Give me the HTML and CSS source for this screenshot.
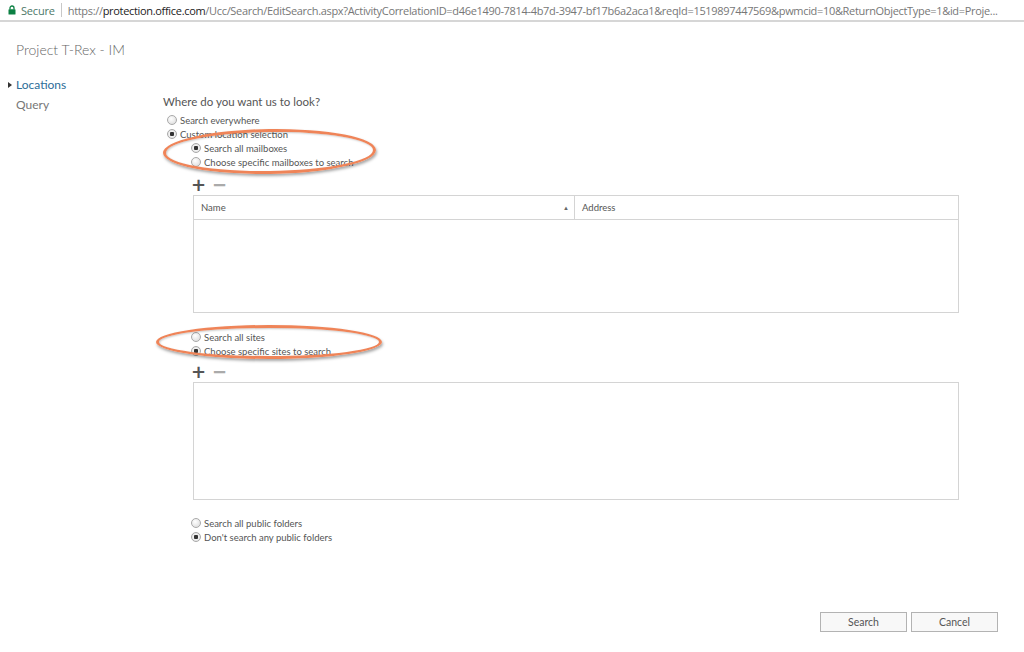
FILE: index.html
```html
<!DOCTYPE html>
<html lang="en">
<head>
    <meta charset="UTF-8">
    <meta name="viewport" content="width=device-width, initial-scale=1.0">
    <title>Project T-Rex - IM</title>
    <link rel="stylesheet" href="styles.css">
</head>
<body>
    <div class="addressbar">
        <svg class="lock" width="8" height="10" viewBox="0 0 8 10">
            <path d="M2 4.5V3a2 2 0 0 1 4 0v1.5" fill="none" stroke="#0b8043" stroke-width="1.3"/>
            <rect x="0.5" y="4.3" width="7" height="5.2" rx="0.6" fill="#0b8043"/>
        </svg>
        <span class="secure">Secure</span>
        <span class="divider"></span>
        <span class="url"><span class="dim">https://</span>protection.office.com<span class="dim">/Ucc/Search/EditSearch.aspx?ActivityCorrelationID=d46e1490-7814-4b7d-3947-bf17b6a2aca1&amp;reqId=1519897447569&amp;pwmcid=10&amp;ReturnObjectType=1&amp;id=Proje...</span></span>
    </div>

    <div class="page">
        <h1 class="title">Project T-Rex - IM</h1>

        <div class="layout">
            <ul class="nav">
                <li class="nav-item active">Locations</li>
                <li class="nav-item">Query</li>
            </ul>

            <div class="main">
                <div class="question">Where do you want us to look?</div>

                <label class="opt"><input type="radio" name="scope"> Search everywhere</label>
                <label class="opt"><input type="radio" name="scope" checked> Custom location selection</label>

                <div class="sub">
                    <div class="group">
                        <label class="opt"><input type="radio" name="mail" checked> Search all mailboxes</label>
                        <label class="opt"><input type="radio" name="mail"> Choose specific mailboxes to search</label>
                        <span class="callout callout-mail"></span>
                    </div>

                    <div class="toolbar">
                        <span class="tool add">+</span>
                        <span class="tool remove">&minus;</span>
                    </div>
                    <div class="grid">
                        <div class="grid-head">
                            <div class="col col-name">Name <span class="sort">&#9650;</span></div>
                            <div class="col col-addr">Address</div>
                        </div>
                    </div>

                    <div class="group sites">
                        <label class="opt"><input type="radio" name="sites"> Search all sites</label>
                        <label class="opt"><input type="radio" name="sites" checked> Choose specific sites to search</label>
                        <span class="callout callout-sites"></span>
                    </div>

                    <div class="toolbar">
                        <span class="tool add">+</span>
                        <span class="tool remove">&minus;</span>
                    </div>
                    <div class="grid"></div>

                    <div class="group folders">
                        <label class="opt"><input type="radio" name="folders"> Search all public folders</label>
                        <label class="opt"><input type="radio" name="folders" checked> Don't search any public folders</label>
                    </div>
                </div>
            </div>
        </div>

        <div class="actions">
            <button class="btn">Search</button>
            <button class="btn">Cancel</button>
        </div>
    </div>
</body>
</html>
```

FILE: styles.css
```css
body {
    margin: 0;
    font-family: Lato, "Open Sans", sans-serif;
    color: #444;
    background: #fff;
}

/* browser address strip */
.addressbar {
    display: flex;
    align-items: center;
    height: 20px;
    border-bottom: 2px solid #d6d6d6;
    padding-left: 8px;
    font-family: "Open Sans", sans-serif;
    font-size: 11px;
    white-space: nowrap;
    overflow: hidden;
}
.lock {
    flex-shrink: 0;
    margin-right: 5px;
}
.secure {
    color: #4d7868;
    letter-spacing: -0.2px;
}
.divider {
    flex-shrink: 0;
    width: 1px;
    height: 14px;
    background: #c8c8c8;
    margin: 0 6px 0 6px;
}
.url {
    color: #222;
    letter-spacing: -0.32px;
}
.url .dim {
    color: #777;
}

.page {
    position: relative;
}
.title {
    margin: 18px 0 0 16px;
    font-size: 14px;
    font-weight: 300;
    line-height: 20px;
    color: #666;
}

.layout {
    display: grid;
    grid-template-columns: 163px 1fr;
    margin-top: 15px;
}
.nav {
    list-style: none;
    margin: 0;
    padding: 0 0 0 16px;
}
.nav-item {
    position: relative;
    font-size: 12px;
    line-height: 20px;
    color: #777;
}
.nav-item.active {
    color: #2d6d98;
}
.nav-item.active::before {
    content: "";
    position: absolute;
    left: -8px;
    top: 7px;
    border-left: 4px solid #333;
    border-top: 3px solid transparent;
    border-bottom: 3px solid transparent;
}

.main {
    padding-top: 17px;
}
.question {
    font-size: 11.5px;
    line-height: 20px;
    color: #555;
    margin-bottom: 1px;
}

.opt {
    display: flex;
    align-items: center;
    gap: 3px;
    height: 14px;
    padding-left: 4px;
    font-size: 9.5px;
    color: #555;
}
.opt input {
    appearance: none;
    width: 10px;
    height: 10px;
    margin: 0;
    border: 1px solid #a9a9a9;
    border-radius: 50%;
    background: radial-gradient(circle at 40% 35%, #fff, #d8d8d8);
}
.opt input:checked {
    background: radial-gradient(circle, #333 0 2px, #f2f2f2 2.5px, #d8d8d8);
}

.sub {
    padding-left: 24px;
}
.group {
    position: relative;
}
.sites {
    margin-top: 17px;
}
.folders {
    margin-top: 16px;
}

/* hand-drawn style highlight rings */
.callout {
    position: absolute;
    border: 3px solid #ef8458;
    border-radius: 50%;
    box-shadow: 1px 2px 3px rgba(0, 0, 0, 0.35), inset 1px 1px 2px rgba(0, 0, 0, 0.2);
    pointer-events: none;
}
.callout-mail {
    left: -24px;
    top: -12px;
    width: 207px;
    height: 39px;
    transform: rotate(-0.8deg);
}
.callout-sites {
    left: -31px;
    top: -5px;
    width: 220px;
    height: 28px;
}

.toolbar {
    display: flex;
    gap: 6px;
    height: 16px;
    margin-top: 8px;
    padding-left: 4px;
    font-family: "DejaVu Sans", sans-serif;
    font-size: 18px;
    line-height: 16px;
    font-weight: bold;
}
.tool.add {
    color: #555;
}
.tool.remove {
    color: #aaa;
}
.sites + .toolbar {
    margin-top: 6px;
}

.grid {
    box-sizing: border-box;
    width: 766px;
    height: 118px;
    margin: 2px 0 0 6px;
    border: 1px solid #d4d4d4;
}
.grid-head {
    display: flex;
    height: 23px;
    border-bottom: 1px solid #d4d4d4;
    font-size: 9.5px;
    color: #555;
}
.col {
    display: flex;
    align-items: center;
}
.col-name {
    width: 381px;
    padding: 0 5px 0 7px;
    justify-content: space-between;
    border-right: 1px solid #d4d4d4;
    box-sizing: border-box;
}
.col-addr {
    padding-left: 7px;
}
.sort {
    font-size: 6px;
    color: #666;
}

.actions {
    display: flex;
    justify-content: flex-end;
    gap: 4px;
    margin-top: 68px;
    padding-right: 26px;
}
.btn {
    width: 87px;
    height: 20px;
    border: 1px solid #b3b3b3;
    background: #f8f8f8;
    font-family: inherit;
    font-size: 10.5px;
    color: #555;
    padding: 0;
}
```
